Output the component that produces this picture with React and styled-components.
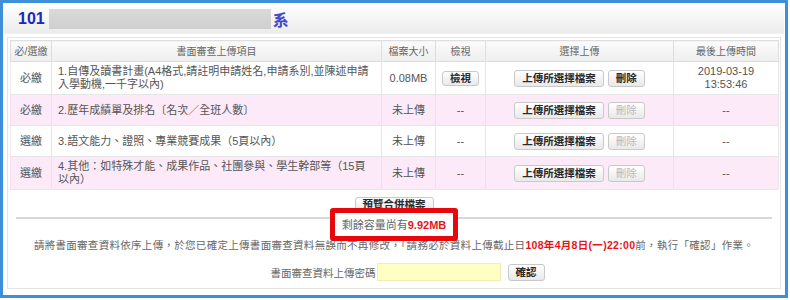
import React from "react";
import styled, { createGlobalStyle } from "styled-components";

const GlobalStyle = createGlobalStyle`
  html, body {
    margin: 0;
    padding: 0;
    background: #ffffff;
  }
  body {
    font-family: "Liberation Sans", "Noto Sans CJK TC", sans-serif;
    color: #555;
  }
`;

const Frame = styled.div`
  box-sizing: border-box;
  width: 788px;
  height: 298px;
  border: 3px solid #3c8fd8;
  background: #fff;
  display: flex;
  flex-direction: column;
`;

const TitleBar = styled.div`
  height: 29px;
  margin: 1px 1px 0;
  display: flex;
  align-items: center;
  padding-left: 14px;
  background: linear-gradient(#ffffff, #ececec);
  border-bottom: 1px solid #f0f0f0;
`;

const TitleNum = styled.span`
  font-size: 16px;
  font-weight: bold;
  color: #1a27b8;
`;

const Redaction = styled.span`
  display: inline-block;
  width: 222px;
  height: 20px;
  margin-left: 4px;
  background: linear-gradient(#dadada, #cfcfcf);
`;

const TitleTail = styled.span`
  font-size: 16px;
  font-weight: bold;
  color: #4848c4;
  margin-left: 2px;
  font-family: "Noto Sans CJK TC", sans-serif;
`;

const Panel = styled.div`
  flex: 1;
  margin: 3px 4px 6px 4px;
  border: 1px solid #e4e4e4;
  padding: 2px 2px 0;
  display: flex;
  flex-direction: column;
`;

const Table = styled.table`
  width: 768px;
  border-collapse: collapse;
  table-layout: fixed;
  font-size: 11px;
  line-height: 13px;
  color: #555;
`;

const Th = styled.th`
  height: 20px;
  padding: 0;
  font-size: 10px;
  font-weight: normal;
  color: #666;
  background: linear-gradient(#fbfbfb, #eeeeee);
  border: 1px solid #dedede;
`;

const Row = styled.tr`
  background: ${(p) => (p.$pink ? "#fceaf8" : "#ffffff")};
`;

const Td = styled.td`
  height: ${(p) => (p.$tall ? "32px" : "30px")};
  padding: 0 ${(p) => (p.$left ? "6px" : "2px")};
  text-align: ${(p) => (p.$left ? "left" : "center")};
  border: 1px solid #e6e6e6;
  border-left-color: ${(p) => (p.$pink ? "#f4e0f0" : "#ececec")};
  vertical-align: middle;
`;

const Btn = styled.button`
  font-family: "Liberation Sans", "Noto Sans CJK TC", sans-serif;
  font-size: 10.5px;
  line-height: 13px;
  font-weight: ${(p) => (p.disabled ? "normal" : "bold")};
  color: ${(p) => (p.disabled ? "#b8b8b8" : "#2a2a2a")};
  background: linear-gradient(#ffffff, #e9e9e9);
  border: 1px solid #c9c9c9;
  border-radius: 3px;
  padding: ${(p) => (p.$slim ? "0 7px" : "1px 7px")};
  margin: 0 2px;
  cursor: pointer;
`;

const Footer = styled.div`
  display: flex;
  flex-direction: column;
  align-items: center;
`;

const PreviewRow = styled.div`
  margin-top: 7px;
  line-height: 0;
`;

const Rule = styled.div`
  align-self: stretch;
  margin: 5px 6px 0;
  border-top: 2px solid #d8d8d8;
`;

const Capacity = styled.div`
  margin-top: 0;
  font-size: 11px;
  line-height: 13px;
  color: #666;
  position: relative;
  z-index: 1;
`;

/* red annotation box drawn over the screenshot */
const RedMark = styled.span`
  position: absolute;
  z-index: -1;
  left: -12px;
  right: -12px;
  top: -11px;
  bottom: -9px;
  background: #fff;
  border: 5px solid #e8070d;
  border-radius: 3px;
  pointer-events: none;
`;

const Hot = styled.span`
  color: #e8141a;
  font-weight: bold;
`;

const Notice = styled.div`
  margin-top: 7px;
  font-size: 10.5px;
  line-height: 13px;
  letter-spacing: 0.3px;
  color: #666;
  white-space: nowrap;
`;

const PassRow = styled.div`
  margin-top: 11px;
  display: flex;
  align-items: center;
  font-size: 10.5px;
  color: #666;
  padding-left: 29px;
`;

const PassInput = styled.input`
  width: 118px;
  height: 14px;
  margin: 0 5px 0 1px;
  border: 1px solid #eeeeb8;
  background: #ffffc4;
`;

const rows = [
  {
    kind: "必繳",
    item: "1.自傳及讀書計畫(A4格式,請註明申請姓名,申請系別,並陳述申請入學動機,一千字以內)",
    size: "0.08MB",
    view: true,
    time: ["2019-03-19", "13:53:46"],
  },
  { kind: "必繳", item: "2.歷年成績單及排名〔名次／全班人數〕", size: "未上傳" },
  { kind: "選繳", item: "3.語文能力、證照、專業競賽成果（5頁以內）", size: "未上傳" },
  {
    kind: "選繳",
    item: "4.其他：如特殊才能、成果作品、社團參與、學生幹部等（15頁以內）",
    size: "未上傳",
  },
];

export default function App() {
  return (
    <>
      <GlobalStyle />
      <Frame>
        <TitleBar>
          <TitleNum>101</TitleNum>
          <Redaction />
          <TitleTail>系</TitleTail>
        </TitleBar>
        <Panel>
          <Table>
            <colgroup>
              <col style={{ width: 41 }} />
              <col style={{ width: 330 }} />
              <col style={{ width: 54 }} />
              <col style={{ width: 50 }} />
              <col style={{ width: 188 }} />
              <col style={{ width: 105 }} />
            </colgroup>
            <thead>
              <tr>
                <Th>必/選繳</Th>
                <Th>書面審查上傳項目</Th>
                <Th>檔案大小</Th>
                <Th>檢視</Th>
                <Th>選擇上傳</Th>
                <Th>最後上傳時間</Th>
              </tr>
            </thead>
            <tbody>
              {rows.map((r, i) => {
                const pink = i % 2 === 1;
                const tall = r.item.length > 30;
                return (
                  <Row key={i} $pink={pink}>
                    <Td $tall={tall} $pink={pink}>{r.kind}</Td>
                    <Td $tall={tall} $pink={pink} $left>{r.item}</Td>
                    <Td $tall={tall} $pink={pink}>{r.size}</Td>
                    <Td $tall={tall} $pink={pink}>
                      {r.view ? <Btn $slim>檢視</Btn> : "--"}
                    </Td>
                    <Td $tall={tall} $pink={pink}>
                      <Btn>上傳所選擇檔案</Btn>
                      <Btn disabled={!r.view}>刪除</Btn>
                    </Td>
                    <Td $tall={tall} $pink={pink}>
                      {r.time ? (
                        <>
                          {r.time[0]}
                          <br />
                          {r.time[1]}
                        </>
                      ) : (
                        "--"
                      )}
                    </Td>
                  </Row>
                );
              })}
            </tbody>
          </Table>
          <Footer>
            <PreviewRow>
              <Btn $slim>預覽合併檔案</Btn>
            </PreviewRow>
            <Rule />
            <Capacity>
              剩餘容量尚有<Hot>9.92MB</Hot>
              <RedMark />
            </Capacity>
            <Notice>
              請將書面審查資料依序上傳，於您已確定上傳書面審查資料無誤而不再修改，「請務必於資料上傳截止日
              <Hot>108年4月8日(一)22:00</Hot>前，執行「確認」作業。
            </Notice>
            <PassRow>
              書面審查資料上傳密碼
              <PassInput type="text" />
              <Btn>確認</Btn>
            </PassRow>
          </Footer>
        </Panel>
      </Frame>
    </>
  );
}
